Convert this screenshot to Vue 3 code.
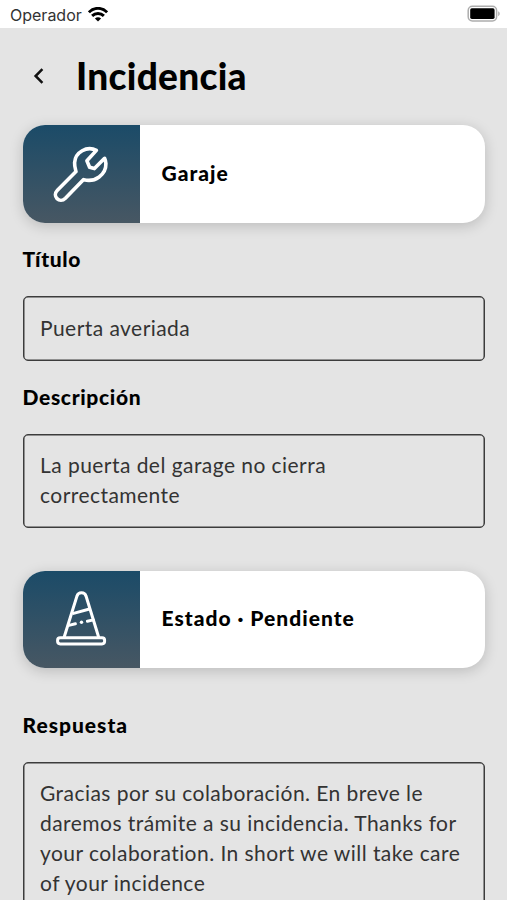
<template>
  <div class="screen">
    <div class="status-bar">
      <div class="carrier">
        <span class="carrier-name">Operador</span>
        <svg
          class="wifi-icon"
          width="20"
          height="15"
          viewBox="0 0 20 15"
          fill="none"
          stroke="#000000"
          stroke-width="2.9">
          <path d="M0.9 5.3C6 0 14 0 19.1 5.3" />
          <path d="M4.1 8.9C7.4 5.7 12.6 5.7 15.9 8.9" />
          <path
            d="M10 14.6L6.9 11.5C8.7 9.8 11.3 9.8 13.1 11.5Z"
            fill="#000000"
            stroke="none" />
        </svg>
      </div>
      <svg
        class="battery-icon"
        width="34"
        height="18"
        viewBox="0 0 34 18">
        <rect
          x="1.2"
          y="1.2"
          width="28.4"
          height="14.8"
          rx="4.2"
          fill="#ffffff"
          stroke="#adadad"
          stroke-width="1.5" />
        <rect
          x="3.2"
          y="3.3"
          width="24.4"
          height="10.6"
          rx="1.6"
          fill="#000000" />
        <path
          d="M31.2 6.2C33.2 7 33.2 10.2 31.2 11Z"
          fill="#adadad" />
      </svg>
    </div>

    <header class="header">
      <svg
        class="back-icon"
        width="12"
        height="18"
        viewBox="0 0 12 18"
        fill="none">
        <path
          d="M10.4 2.2L3.6 9L10.4 15.8"
          stroke="#111111"
          stroke-width="2.5" />
      </svg>
      <h1 class="title">Incidencia</h1>
    </header>

    <main class="content">
      <div class="card">
        <div class="card-icon">
          <svg
            width="60"
            height="60"
            viewBox="0 0 60 60"
            fill="none"
            stroke="#ffffff"
            stroke-width="3.6"
            stroke-linejoin="round"
            stroke-linecap="round">
            <path
              d="M45.4 6.4C36 1.4 24.2 8.2 23.6 18.6C23.4 22 24.2 24.6 25 27.6L6.4 46.2C0.6 52.2 8.6 60 14.4 54.3L32.6 35.6C44 39 55.2 30.4 54.9 19.6C54.8 17.6 54.4 16 53.6 14.3L43.4 24.6L38.6 23.2L35.9 16.8L45.4 6.4Z" />
          </svg>
        </div>
        <span class="card-text">Garaje</span>
      </div>

      <template
        v-for="field in fields"
        :key="field.label">
        <h2 class="label">{{ field.label }}</h2>
        <p class="box">{{ field.value }}</p>
      </template>

      <div class="card card-status">
        <div class="card-icon">
          <svg
            width="60"
            height="60"
            viewBox="0 1 60 60"
            fill="none"
            stroke="#ffffff"
            stroke-width="3"
            stroke-linejoin="round"
            stroke-linecap="round">
            <rect
              x="6.6"
              y="49.7"
              width="47"
              height="6.2"
              rx="2.6" />
            <path
              d="M13.2 49L25.9 8.3C27.2 3.6 33.8 3.6 35.1 8.3L47.6 49" />
            <path d="M22.6 25.4L38.5 21" />
            <path d="M18.8 37.1L24.4 35.8" />
            <path d="M36.4 33.2L42.3 31.9" />
            <circle
              cx="30.5"
              cy="34.2"
              r="1.7"
              fill="#ffffff"
              stroke="none" />
          </svg>
        </div>
        <span class="card-text">Estado · Pendiente</span>
      </div>

      <h2 class="label label-answer">Respuesta</h2>
      <p class="box box-answer">{{ answer }}</p>
    </main>
  </div>
</template>

<script setup>
  const fields = [
    { label: "Título", value: "Puerta averiada" },
    {
      label: "Descripción",
      value: "La puerta del garage no cierra correctamente",
    },
  ];

  const answer =
    "Gracias por su colaboración. En breve le daremos trámite a su incidencia. Thanks for your colaboration. In short we will take care of your incidence";
</script>

<style>
  body {
    background-color: #e4e4e4;
  }
</style>

<style scoped>
  .screen {
    height: 900px;
    overflow: hidden;
    background-color: #e4e4e4;
    font-family: "Lato", sans-serif;
    color: #000000;
  }

  .status-bar {
    display: flex;
    align-items: center;
    justify-content: space-between;
    box-sizing: border-box;
    height: 28px;
    padding: 0 6px 0 10px;
    background-color: #ffffff;
  }

  .carrier {
    display: flex;
    align-items: center;
    gap: 6px;
    padding-top: 1px;
  }

  .carrier-name {
    font-family: "Inter", sans-serif;
    font-size: 16px;
    color: #333333;
  }

  .header {
    display: flex;
    align-items: center;
    box-sizing: border-box;
    height: 97px;
    padding: 0 0 2px 32px;
  }

  .title {
    margin: 0 0 0 32px;
    font-size: 37px;
    font-weight: 900;
    line-height: 44px;
    letter-spacing: 0.3px;
  }

  .content {
    padding: 0 22px 0 22.5px;
  }

  .card {
    display: flex;
    align-items: center;
    height: 98px;
    overflow: hidden;
    border-radius: 22px;
    background-color: #ffffff;
    box-shadow: 0 3px 14px rgba(0, 0, 0, 0.18);
  }

  .card-status {
    height: 97px;
    margin-top: 43px;
  }

  .card-icon {
    display: flex;
    align-items: center;
    justify-content: center;
    width: 117.5px;
    height: 100%;
    background: linear-gradient(#1b4b68, #475763);
  }

  .card-text {
    margin-left: 21.5px;
    padding-bottom: 3px;
    font-size: 21px;
    font-weight: 900;
    letter-spacing: 1px;
  }

  .label {
    margin: 0;
    padding: 21px 0 23px;
    font-size: 21px;
    font-weight: 900;
    line-height: 29px;
    letter-spacing: 0.65px;
  }

  .label-answer {
    padding: 42px 0 23px;
    letter-spacing: 1px;
  }

  .box {
    box-sizing: border-box;
    margin: 0;
    padding: 15.5px 16px 17.3px 16.5px;
    border: 1px solid #3c3c3c;
    border-radius: 5px;
    box-shadow: inset 0 0 0 0.5px #3c3c3c;
    font-size: 21px;
    line-height: 29.8px;
    letter-spacing: 0.45px;
    color: #333333;
  }

  .box-answer {
    height: 160px;
  }
</style>
